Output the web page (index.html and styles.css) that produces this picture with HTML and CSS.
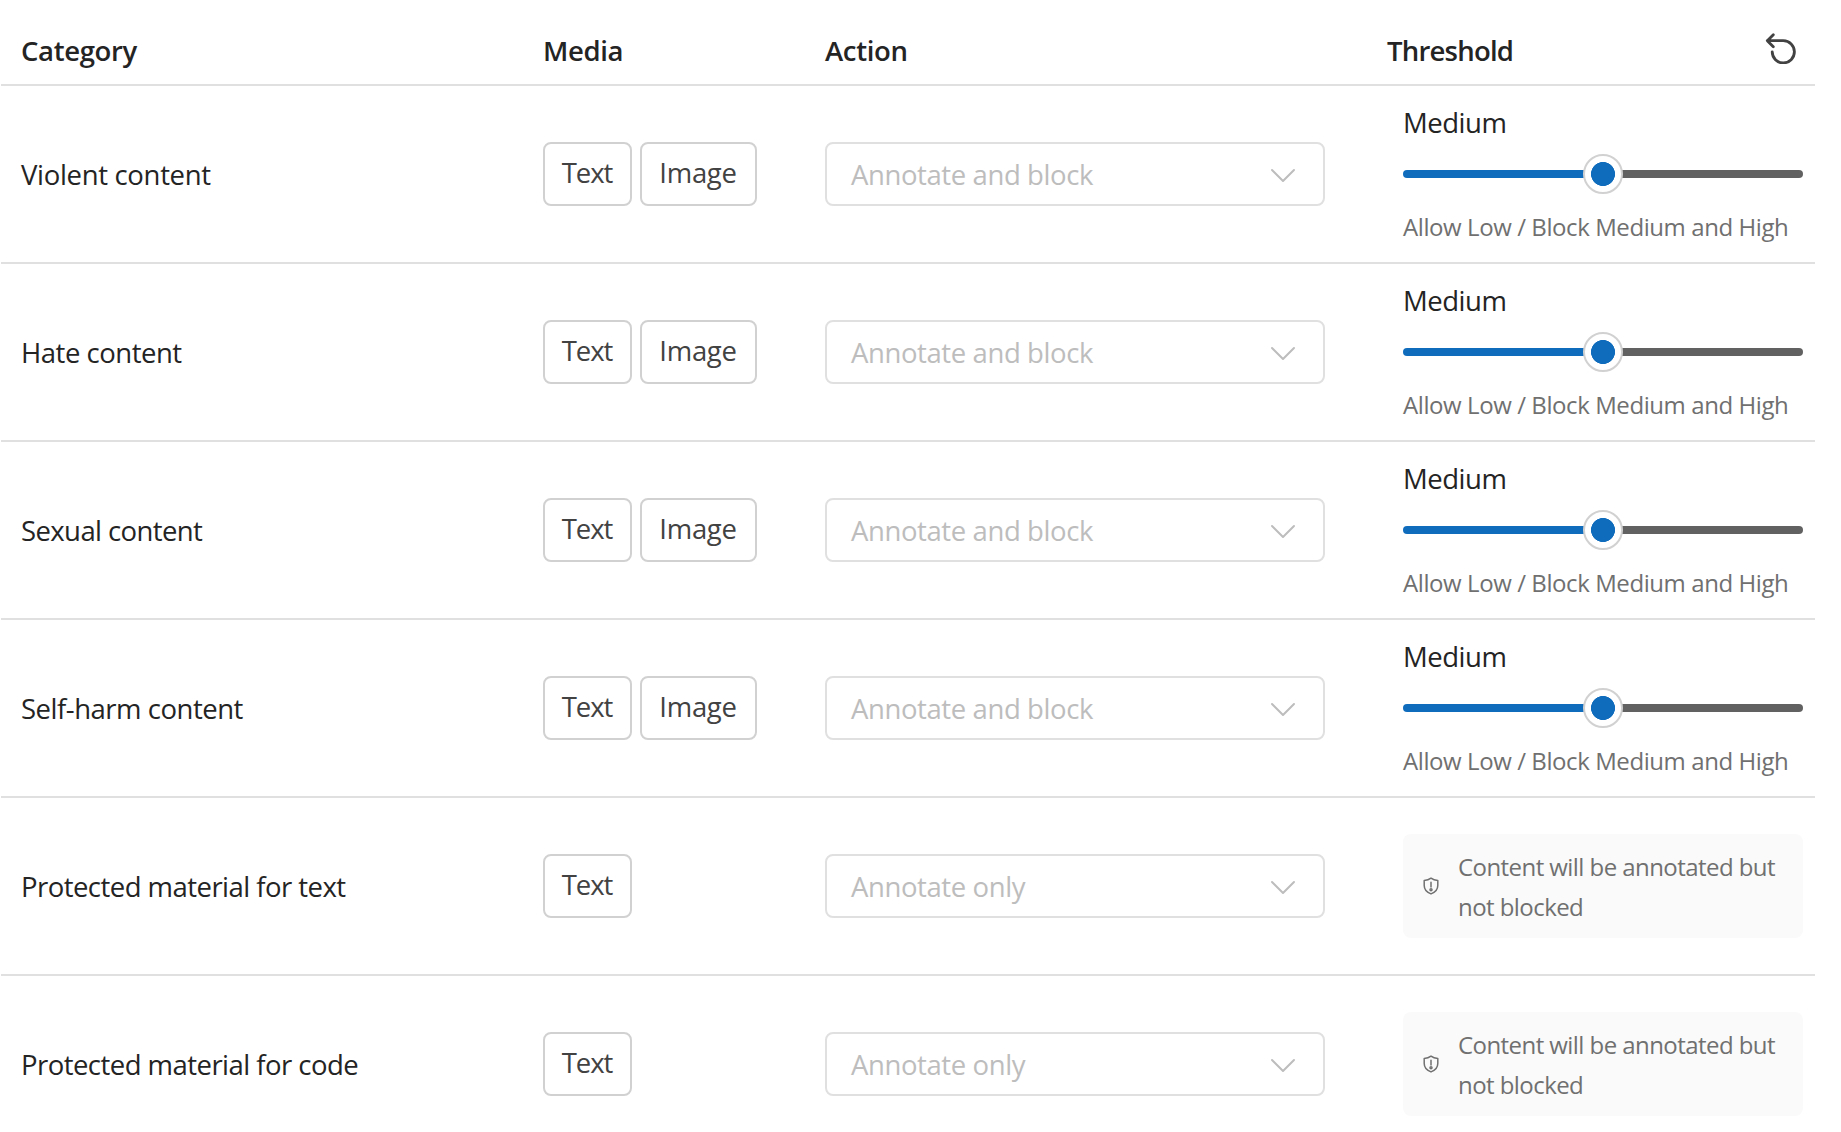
FILE: index.html
```html
<!DOCTYPE html>
<html lang="en">
<head>
<meta charset="utf-8">
<title>Content filters</title>
<link rel="stylesheet" href="styles.css">
</head>
<body>
<svg class="sprite" width="0" height="0" aria-hidden="true">
  <symbol id="chevron" viewBox="0 0 26 16"><path d="M2 2 L13 13 L24 2"/></symbol>
  <symbol id="shield" viewBox="0 0 16 18"><path d="M8 1.2 C6 2.8 3.7 3.5 1.2 3.6 V8.6 C1.2 12.7 3.5 15.3 8 16.9 C12.5 15.3 14.8 12.7 14.8 8.6 V3.6 C12.3 3.5 10 2.8 8 1.2 Z M8 5.2 V10"/><circle cx="8" cy="12.8" r="1"/></symbol>
</svg>
<main class="table">
  <div class="row head">
    <div class="category">Category</div>
    <div class="media">Media</div>
    <div class="action">Action</div>
    <div class="head-threshold"><span class="head-title">Threshold</span>
      <svg class="reset" viewBox="0 0 32 32"><path d="M9.3 2.7 L3.3 8.7 L9.3 14.7 M3.3 8.7 H19.3 A11.1 11.1 0 1 1 8.2 19.8"/></svg>
    </div>
  </div>
  <div class="row">
    <div class="category violent">Violent content</div>
    <div class="media"><span class="tag">Text</span><span class="tag image">Image</span></div>
    <div class="action"><div class="select">Annotate and block<svg class="chevron"><use href="#chevron"/></svg></div></div>
    <div class="threshold"><div class="level">Medium</div><div class="slider"><span class="thumb"></span></div><div class="hint">Allow Low / Block Medium and High</div></div>
  </div>
  <div class="row">
    <div class="category">Hate content</div>
    <div class="media"><span class="tag">Text</span><span class="tag image">Image</span></div>
    <div class="action"><div class="select">Annotate and block<svg class="chevron"><use href="#chevron"/></svg></div></div>
    <div class="threshold"><div class="level">Medium</div><div class="slider"><span class="thumb"></span></div><div class="hint">Allow Low / Block Medium and High</div></div>
  </div>
  <div class="row">
    <div class="category sexual">Sexual content</div>
    <div class="media"><span class="tag">Text</span><span class="tag image">Image</span></div>
    <div class="action"><div class="select">Annotate and block<svg class="chevron"><use href="#chevron"/></svg></div></div>
    <div class="threshold"><div class="level">Medium</div><div class="slider"><span class="thumb"></span></div><div class="hint">Allow Low / Block Medium and High</div></div>
  </div>
  <div class="row">
    <div class="category">Self-harm content</div>
    <div class="media"><span class="tag">Text</span><span class="tag image">Image</span></div>
    <div class="action"><div class="select">Annotate and block<svg class="chevron"><use href="#chevron"/></svg></div></div>
    <div class="threshold"><div class="level">Medium</div><div class="slider"><span class="thumb"></span></div><div class="hint">Allow Low / Block Medium and High</div></div>
  </div>
  <div class="row">
    <div class="category protected">Protected material for text</div>
    <div class="media"><span class="tag">Text</span></div>
    <div class="action"><div class="select">Annotate only<svg class="chevron"><use href="#chevron"/></svg></div></div>
    <div class="threshold"><div class="notice"><svg class="shield"><use href="#shield"/></svg><p>Content will be annotated but not blocked</p></div></div>
  </div>
  <div class="row">
    <div class="category protected">Protected material for code</div>
    <div class="media"><span class="tag">Text</span></div>
    <div class="action"><div class="select">Annotate only<svg class="chevron"><use href="#chevron"/></svg></div></div>
    <div class="threshold"><div class="notice"><svg class="shield"><use href="#shield"/></svg><p>Content will be annotated but not blocked</p></div></div>
  </div>
</main>
</body>
</html>
```
FILE: styles.css
```css
* { box-sizing: border-box; }
html, body { height: 100%; }
body {
  margin: 0;
  overflow: hidden;
  background: #fff;
  color: #242424;
  font: 27.5px/40px "Segoe UI", "Open Sans", "Noto Sans", sans-serif;
  letter-spacing: -0.48px;
  white-space: nowrap;
}
.sprite { display: block; }
svg { fill: none; stroke: currentColor; stroke-linecap: round; stroke-linejoin: round; }

.table { width: 1814px; margin-left: 1px; }
.row {
  display: grid;
  grid-template-columns: 522px 282px 558px 1fr;
  align-items: center;
  height: 178px;
  padding-left: 20px;
  border-bottom: 2px solid #e0e0e0;
}
.category { padding-top: 2px; }
.violent { letter-spacing: -0.32px; }
.sexual { letter-spacing: -0.6px; }
.protected { letter-spacing: -0.54px; }

.head { height: 86px; padding-top: 17px; font-weight: 600; letter-spacing: -0.35px; }
.head .category { padding-top: 0; }
.head-threshold {
  display: flex;
  justify-content: space-between;
  align-items: center;
  padding: 0 19px 0 4px;
}
.head-title { letter-spacing: -0.78px; }
.reset { width: 32px; height: 32px; margin-top: -5px; color: #424242; stroke-width: 2.8; }

.media { display: flex; gap: 8px; }
.tag {
  width: 89px;
  height: 64px;
  padding: 9px 1px 11px 0;
  border: 2px solid #d1d1d1;
  border-radius: 8px;
  color: #424242;
  text-align: center;
  letter-spacing: -1.1px;
}
.tag.image { width: 117px; letter-spacing: -0.3px; }

.select {
  display: flex;
  align-items: center;
  justify-content: space-between;
  width: 500px;
  height: 64px;
  padding: 2px 27px 0 24px;
  border: 2px solid #e0e0e0;
  border-radius: 8px;
  color: #bdbdbd;
  letter-spacing: -0.4px;
}
.chevron { width: 26px; height: 16px; margin-top: 1px; stroke-width: 2; }

.threshold { width: 400px; margin-left: 20px; }
.level { padding-top: 1px; margin-bottom: -1px; }
.slider {
  display: flex;
  align-items: center;
  justify-content: center;
  height: 8px;
  margin: 28px 0 29px;
  border-radius: 4px;
  background: linear-gradient(90deg, #0f6cbd 50%, #616161 50%);
}
.thumb {
  flex: none;
  width: 40px;
  height: 40px;
  border: 2px solid #d1d1d1;
  border-radius: 50%;
  background: radial-gradient(circle, #0f6cbd 11.7px, #fff 12.3px);
}
.hint { font-size: 24px; color: #707070; letter-spacing: -0.42px; }
.notice {
  display: flex;
  align-items: center;
  gap: 20px;
  height: 104px;
  padding: 0 12px 0 20px;
  border-radius: 8px;
  background: #fafafa;
  color: #707070;
  font-size: 24px;
  letter-spacing: -0.56px;
}
.notice p { margin: 0 0 0 -1px; padding-top: 2px; white-space: normal; }
.shield { flex: none; width: 16px; height: 18px; stroke-width: 1.5; }
.shield circle { fill: currentColor; stroke: none; }
```
